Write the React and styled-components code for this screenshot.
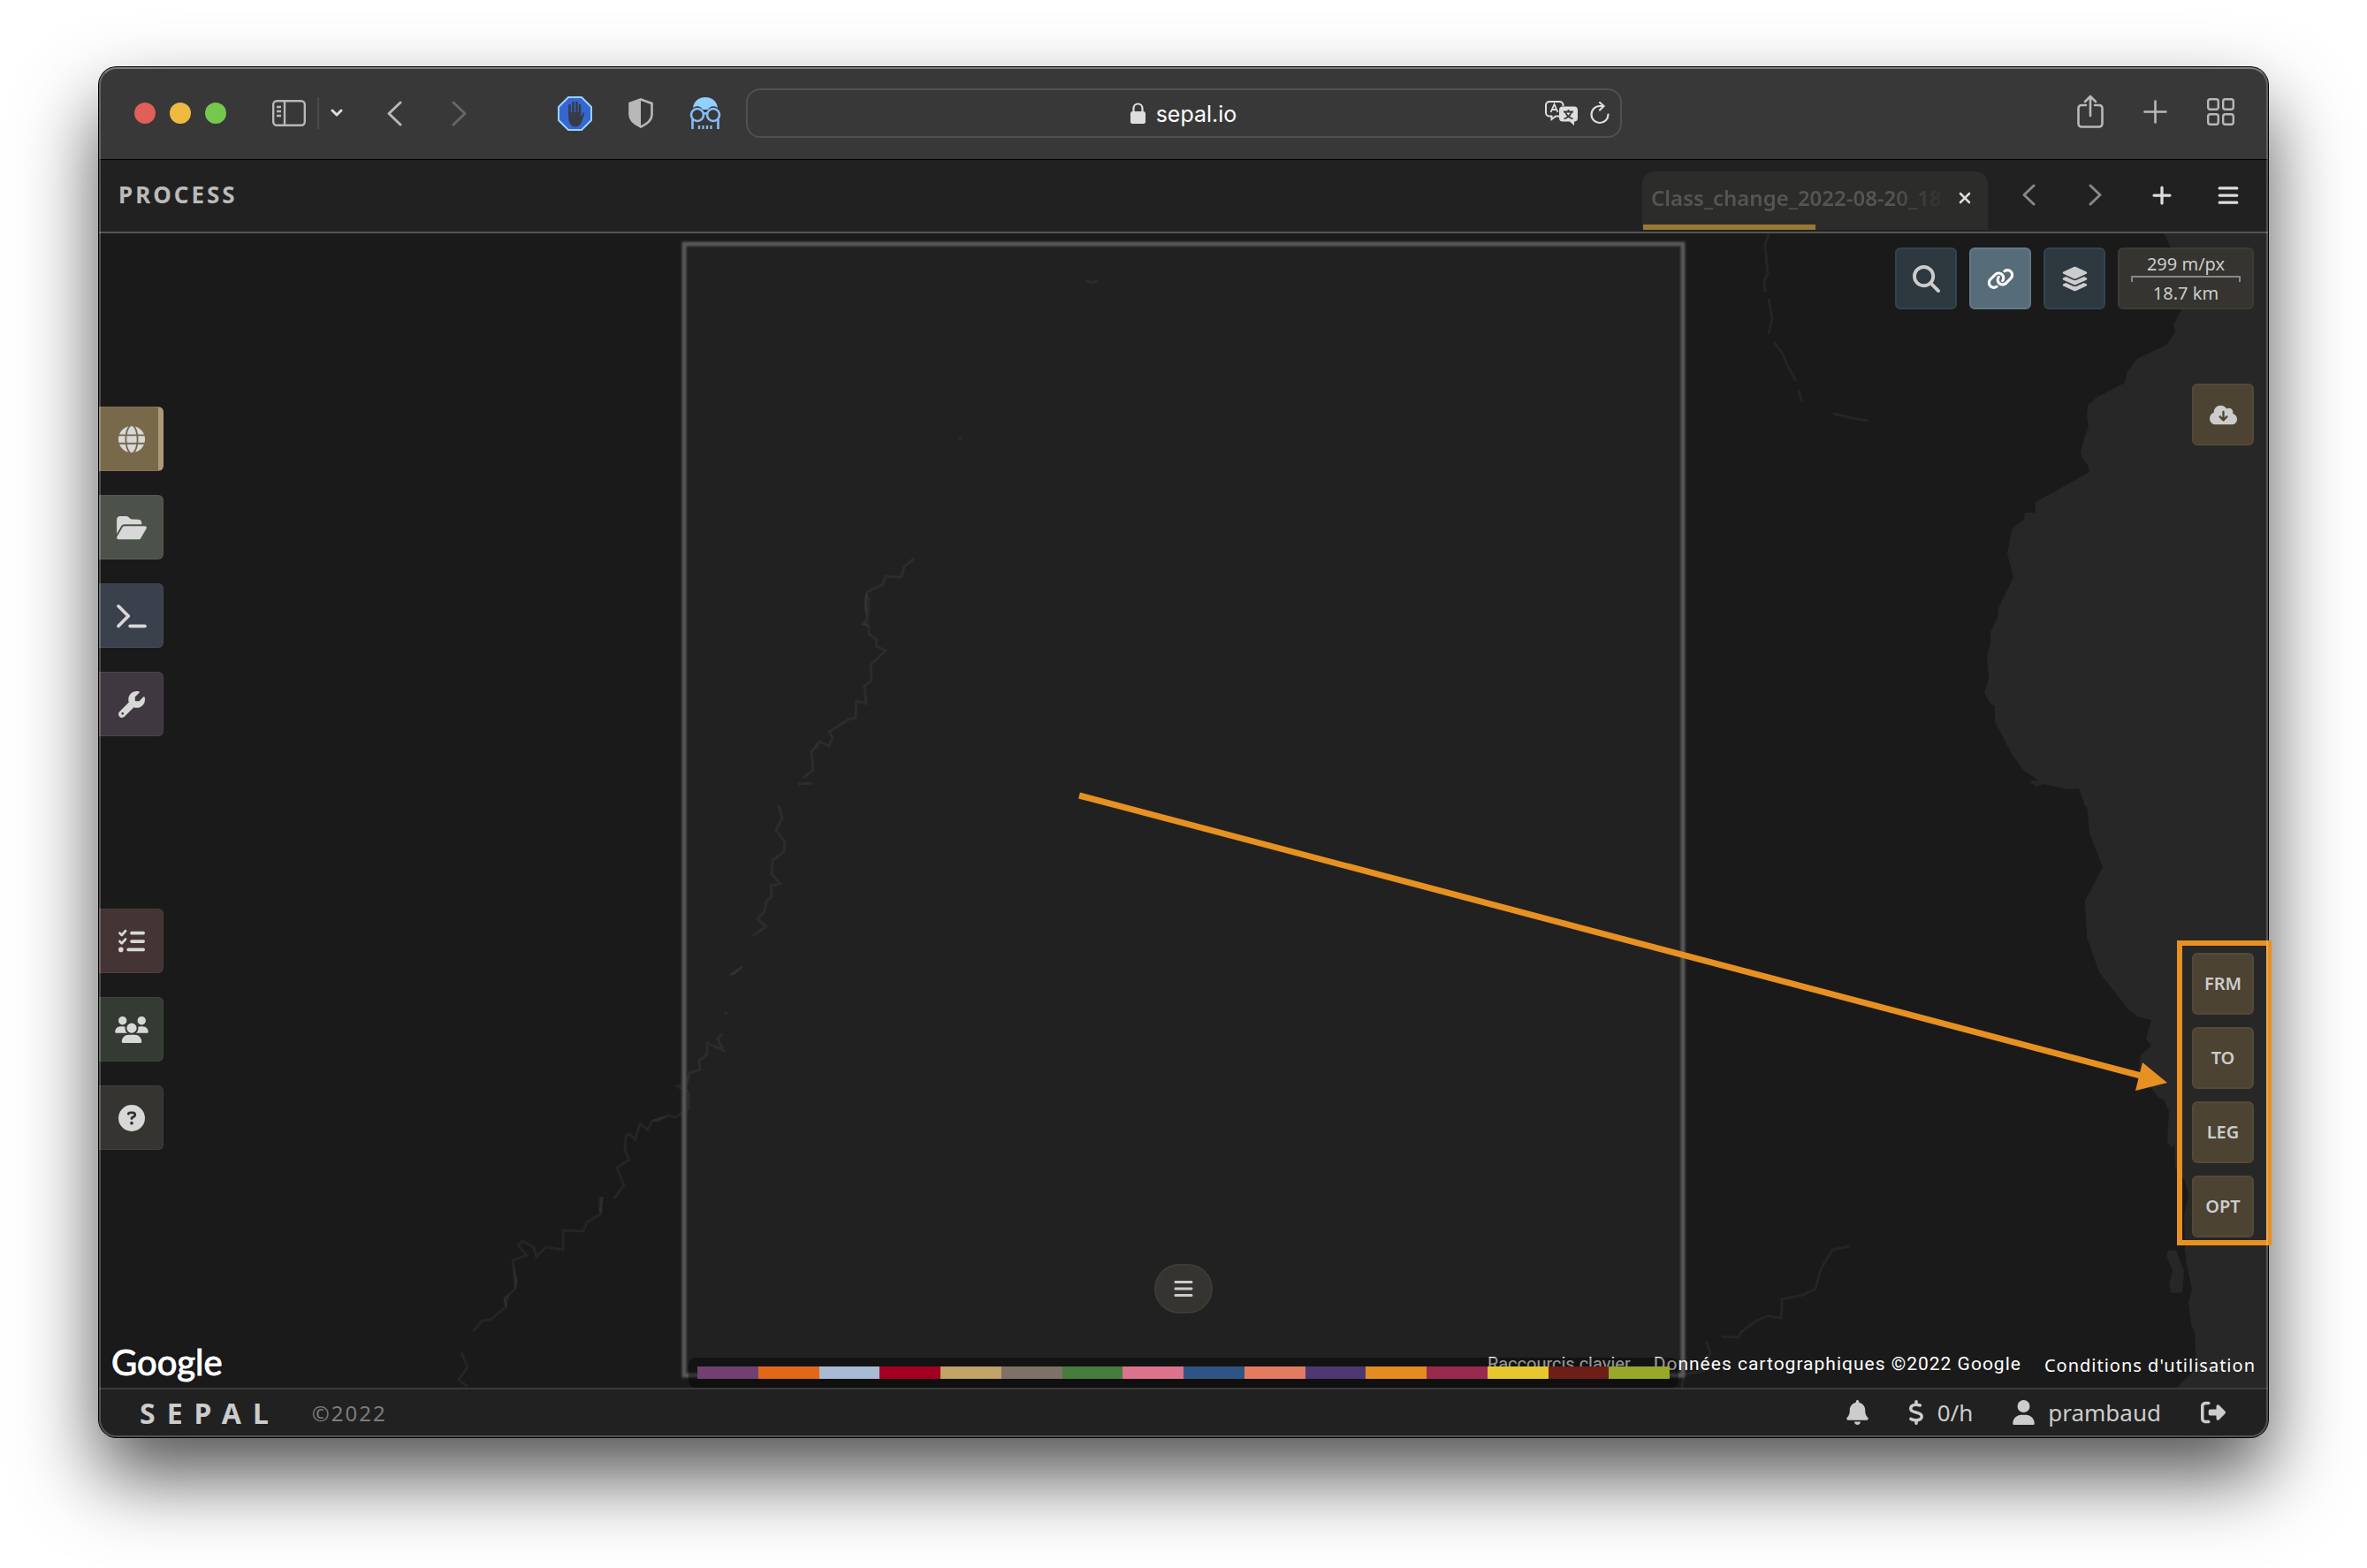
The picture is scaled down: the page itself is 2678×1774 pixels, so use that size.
import React from 'react'
import styled, { createGlobalStyle, css } from 'styled-components'
import {
  FaGlobe, FaFolderOpen, FaTerminal, FaWrench, FaListCheck, FaUsers, FaCircleQuestion, FaMagnifyingGlass,
  FaLink, FaLayerGroup, FaCloudArrowDown, FaBars, FaPlus, FaXmark, FaBell, FaDollarSign, FaUser,
  FaRightFromBracket
} from 'react-icons/fa6'

const GlobalStyle = createGlobalStyle`
  *, *::before, *::after { box-sizing: border-box; }
  body {
    margin: 0;
    background: #fff;
    font-family: "Noto Sans", "Open Sans", sans-serif;
    color: #ccc;
  }
  button, input { font: inherit; color: inherit; }
`

const Stage = styled.div`
  display: flex;
  min-height: 100vh;
  padding: 76px 112px 148px;
`

const Window = styled.div`
  position: relative;
  display: flex;
  flex: 1;
  min-width: 0;
  border-radius: 20px;
  box-shadow: 0 0 0 1px #000, 0 44px 88px rgba(0, 0, 0, 0.68);
`

const Frame = styled.div`
  position: relative;
  display: flex;
  flex-direction: column;
  flex: 1;
  min-width: 0;
  overflow: hidden;
  border-radius: 20px;
  background: #1a1a1a;

  &::after {
    content: "";
    position: absolute;
    inset: 0;
    z-index: 3;
    border: 2px solid rgba(255, 255, 255, 0.22);
    border-top-color: rgba(255, 255, 255, 0.36);
    border-radius: 20px;
    pointer-events: none;
  }
`

const PlainButton = styled.button`
  display: flex;
  align-items: center;
  justify-content: center;
  padding: 0;
  border: 0;
  background: none;
  cursor: pointer;
`

/* ---- browser chrome ---- */

const Toolbar = styled.div`
  display: grid;
  grid-template-columns: minmax(0, 1fr) minmax(0, 991px) minmax(0, 1fr);
  align-items: center;
  height: 105px;
  border-bottom: 1px solid #000;
  background: #383838;
  color: #b8b8b8;
`

const ToolSide = styled.div`
  display: flex;
  align-items: center;
  justify-content: ${p => p.$end ? 'flex-end' : 'flex-start'};
  padding: ${p => p.$end ? '0 38px 4px 0' : '0 0 0 40px'};
`

const ToolGroup = styled.div`
  display: flex;
  align-items: center;
  gap: ${p => p.$gap}px;
  margin-left: ${p => p.$before || 0}px;
`

const Light = styled.button`
  width: 24px;
  height: 24px;
  padding: 0;
  border: 0;
  border-radius: 50%;
  background: ${p => p.$color};
`

const Divider = styled.span`
  width: 2px;
  height: 36px;
  background: #4a4a4a;
`

const DimTool = styled(PlainButton)`
  color: #666;
`

const AddressBar = styled.div`
  display: grid;
  grid-template-columns: 1fr auto 1fr;
  align-items: center;
  height: 56px;
  padding: 0 12px;
  border: 2px solid #505050;
  border-radius: 16px;
  color: #dedede;
`

const Address = styled.label`
  grid-column: 2;
  display: flex;
  align-items: center;
  gap: 12px;
`

const AddressInput = styled.input`
  field-sizing: content;
  padding: 2px 0 0;
  border: 0;
  outline: 0;
  background: none;
  color: #fff;
  font-family: Inter, sans-serif;
  font-size: 25px;
  line-height: 32px;
`

const AddressActions = styled.div`
  display: flex;
  align-items: center;
  justify-content: flex-end;
  gap: 14px;
`

/* ---- app header ---- */

const Header = styled.header`
  display: flex;
  align-items: center;
  justify-content: space-between;
  height: 83px;
  padding: 0 8px 0 22px;
  border-bottom: 2px solid #555;
  background: #212121;
`

const Title = styled.h1`
  margin: 0;
  padding-bottom: 4px;
  color: #bbb;
  font-size: 26px;
  font-weight: 700;
  letter-spacing: 3px;
  text-transform: uppercase;
`

const Tabs = styled.nav`
  display: flex;
  align-self: stretch;
  align-items: center;
`

const Tab = styled.div`
  display: flex;
  align-items: center;
  align-self: flex-end;
  width: 391px;
  height: 66px;
  margin: 0 9px 2px 0;
  padding: 0 16px 6px 10px;
  border-radius: 14px 14px 0 0;
  background: linear-gradient(#987a35, #987a35) 1px 100% / 195px 6px no-repeat #2c2c2a;
`

const TabName = styled.button`
  flex: 1;
  min-width: 0;
  overflow: hidden;
  padding: 0;
  border: 0;
  background: none;
  color: #555552;
  font-size: 24px;
  font-weight: 600;
  line-height: 32px;
  text-align: left;
  white-space: nowrap;
  mask-image: linear-gradient(to right, #000 78%, transparent 98%);
`

const HeaderButton = styled(PlainButton)`
  width: 75px;
  height: 48px;
  padding-bottom: 2px;
  color: ${p => p.$dim ? '#888' : '#ddd'};
`

/* ---- map ---- */

const Map = styled.main`
  position: relative;
  display: grid;
  flex: 1;
  min-height: 0;
`

const MapCanvas = styled.svg`
  position: absolute;
  inset: 0;
  width: 100%;
  height: 100%;
`

const layer = css`
  grid-area: 1 / 1;
  display: flex;
  z-index: 1;
`

const SideMenu = styled.nav`
  ${layer}
  flex-direction: column;
  justify-content: space-between;
  justify-self: start;
  padding: 196px 0 269px;
`

const SideGroup = styled.div`
  display: flex;
  flex-direction: column;
  gap: 27px;
`

const SideButton = styled.button`
  display: flex;
  align-items: center;
  justify-content: center;
  width: 73px;
  height: 73px;
  padding: 0;
  border: 1px solid rgba(255, 255, 255, 0.05);
  border-right: ${p => p.$active ? '6px solid #ac9a76' : '1px solid rgba(255, 255, 255, 0.05)'};
  padding-left: ${p => p.$active ? 5 : 0}px;
  border-radius: 0 6px 6px 0;
  background: ${p => p.$color};
  color: #d8d8d8;

  svg {
    width: ${p => p.$icon || 30}px;
    height: 30px;
  }
`

const Tools = styled.div`
  ${layer}
  flex-direction: column;
  align-items: flex-end;
  justify-self: end;
  padding: 16px 16px 170px;
`

const ToolRow = styled.div`
  display: flex;
  gap: 14px;
  margin-bottom: 84px;
`

const tones = {
  blue: ['#2e383f', '#32444f'],
  active: ['#566c79', '#607987'],
  brown: ['#4c4332', '#544935']
}

const MapButton = styled.button`
  display: flex;
  align-items: center;
  justify-content: center;
  width: 70px;
  height: 70px;
  padding: 0;
  border: 2px solid ${p => tones[p.$tone][1]};
  border-radius: 6px;
  background: ${p => tones[p.$tone][0]};
  color: ${p => p.$tone === 'active' ? '#fff' : '#ccc'};

  svg {
    width: 31px;
    height: 31px;
  }
`

const PanelButton = styled(MapButton)`
  padding-bottom: 2px;
  font-size: 20px;
  font-weight: 600;
`

const PanelButtons = styled.div`
  display: flex;
  flex-direction: column;
  gap: 14px;
  margin-top: auto;
`

const Scale = styled.div`
  display: flex;
  flex-direction: column;
  justify-content: center;
  width: 154px;
  height: 70px;
  padding: 0 13px;
  border: 2px solid #3c3b35;
  border-radius: 6px;
  background: #353430;
  font-size: 20px;
  line-height: 26px;
  text-align: center;
`

const ScaleBar = styled.div`
  height: 7px;
  border: 2px solid #888;
  border-bottom: 0;
`

const Credits = styled.div`
  ${layer}
  align-items: flex-end;
  align-self: end;
  padding: 0 14px;
  color: #fff;
  font-family: Roboto, sans-serif;
  font-size: 20px;
  line-height: 28px;
`

const GoogleMark = styled.a`
  margin-right: auto;
  color: #fff;
  font-family: Lato, sans-serif;
  font-size: 40px;
  line-height: 58px;
  text-decoration: none;
  text-shadow: 0 0 3px #000;
  -webkit-text-stroke: 1px #fff;
`

const Shortcuts = styled.button`
  margin: 0 26px 13px 0;
  padding: 0;
  border: 0;
  background: none;
`

const MapData = styled.span`
  margin: 0 26px 13px 0;
  font-size: 21px;
  letter-spacing: 1px;
`

const Terms = styled.a`
  margin-bottom: 11px;
  color: #fff;
  font-family: "Noto Sans", sans-serif;
  letter-spacing: 1px;
  text-decoration: none;
`

const BottomCenter = styled.div`
  ${layer}
  flex-direction: column;
  align-items: center;
  align-self: end;
  justify-self: center;
  gap: 50px;
  width: 1120px;
  max-width: 100%;
`

const LegendToggle = styled(PlainButton)`
  width: 66px;
  height: 56px;
  border: 2px solid #3c3b35;
  border-radius: 28px;
  background: #353430;
  color: #ccc;
  font-size: 24px;
`

const Legend = styled.div`
  display: flex;
  width: 100%;
  padding: 10px;
  border-radius: 8px;
  background: rgba(0, 0, 0, 0.4);
`

const Swatch = styled.span`
  flex: 1;
  height: 14px;
  background: ${p => p.$color};
`

/* ---- footer ---- */

const Footer = styled.footer`
  display: flex;
  align-items: center;
  height: 56px;
  padding: 0 48px 2px 46px;
  border-top: 2px solid #3a3a3a;
  background: #212121;
  font-size: 26px;
`

const Brand = styled.strong`
  color: #ccc;
  font-size: 32px;
  font-weight: 700;
  letter-spacing: 13px;
`

const Copyright = styled.span`
  margin: 0 auto 0 36px;
  color: #7c7c7c;
  font-size: 24px;
  letter-spacing: 2px;
`

const FooterItem = styled(PlainButton)`
  gap: 15px;
  margin-left: 45px;
  color: #ccc;

  svg {
    width: ${p => p.$icon}px;
    height: 28px;
  }
`

/* ---- annotation ---- */

const Arrow = styled.svg`
  position: absolute;
  inset: 0;
  width: 100%;
  height: 100%;
  overflow: visible;
  pointer-events: none;
`

const colors = [
  '#714070', '#e26818', '#a9bad4', '#a30021', '#c1a267', '#7e7166', '#467c3c', '#da738b',
  '#2e5486', '#e37b60', '#4d3873', '#e58c20', '#982a4e', '#e7c72e', '#6d1e16', '#98a829'
]

const rivers = [
  'M1034 632L1023 641L1020 653L1002 652L999 661L981 670L979 681L981 700L976 706L983 709L983 717L992 724L991 731L1002 736L985 752L986 770L978 776L980 796L969 793L968 812L960 814L938 828L942 834L938 844L927 839L918 850L920 871L909 880',
  'M903 887L919 886',
  'M881 911L885 926L878 939L888 953L887 964L874 973L873 989L883 1000L872 1002L873 1014L867 1020L865 1031L857 1040L867 1048L851 1059',
  'M840 1094L826 1103M819 1146h4',
  'M817 1170L812 1175L818 1188L800 1180L800 1193L791 1200L792 1210L780 1214L777 1226L766 1229L779 1236L779 1254L764 1264L756 1262L737 1269L733 1278L724 1271L719 1289L712 1283L708 1285L707 1302L712 1312L698 1321L706 1341L695 1356',
  'M681 1354L679 1374L664 1383L660 1393L637 1392L637 1414L617 1411L607 1422L604 1411L591 1404L586 1409L596 1420L580 1426L584 1449L583 1458L571 1469L573 1478L555 1493L546 1494L535 1506',
  'M522 1530L529 1547L519 1561L529 1569',
  'M2001 264L1997 277L2000 310L1996 317L1997 330M2001 338L2005 360L2001 378M2007 387L2017 400L2021 411L2032 431M2035 442L2039 455M2074 468L2096 473L2113 476',
  'M2092 1410L2073 1414L2060 1436L2054 1458L2040 1465L2016 1470L2016 1480L2015 1491L1999 1489L1986 1495L1970 1507L1967 1513L1947 1512M1930 1517L1935 1530L1928 1551L1905 1555L1903 1570',
  'M1228 317l6 3l8 -2M1085 496h3'
]

// wider stretches of the river bed
const pools = 'M979 670L985 676L983 700L978 690ZM976 706L983 700L983 709ZM676 1354H683L681 1374L677 1370ZM580 1430L586 1449L583 1460L580 1448ZM570 1468L577 1465L573 1479L570 1476ZM918 850L927 840L926 847ZM826 1103L840 1093L832 1103ZM737 1267L756 1262L745 1270Z'

const land = 'M2448 264L2455 278L2462 300L2468 350L2459 368L2461 376L2451 390L2418 406L2407 420L2404 433L2373 449L2362 459L2361 470L2363 483L2358 496L2354 511L2356 519L2362 526L2364 534L2303 568L2303 580L2291 580L2290 587L2276 599L2271 627L2278 653L2261 688L2260 699L2252 715L2252 728L2248 742L2250 768L2245 784L2252 796L2257 799L2257 818L2260 822L2276 853L2289 871L2306 883L2296 884L2303 890L2311 887L2340 893L2352 892L2359 912L2361 912L2364 943L2379 981L2359 1019L2361 1060L2375 1100L2408 1142L2418 1150L2434 1154L2428 1175L2434 1183L2422 1194L2420 1211L2435 1232L2442 1242L2448 1244L2454 1257L2452 1291L2457 1299L2460 1294L2461 1321L2472 1336L2476 1352L2471 1375L2472 1413L2474 1430L2480 1460L2476 1473L2479 1499L2483 1506L2485 1548L2463 1570H2570V264Z'
const island = 'M2454 1414L2462 1415L2471 1438L2469 1462L2457 1463L2454 1454L2458 1438L2451 1420Z'

const SidebarIcon = () => (
  <svg width="38" height="30" viewBox="0 0 38 30" fill="none" stroke="currentColor" strokeWidth="2.4">
    <rect x="1.2" y="1.2" width="35.6" height="27.6" rx="4" />
    <path d="M14 1v28M5 8h5M5 13h5M5 18h5" />
  </svg>
)

const Chevron = ({ width, height, flip }) => (
  <svg width={width} height={height} viewBox={`0 0 ${width} ${height}`} fill="none" stroke="currentColor"
    strokeWidth="3" strokeLinecap="round" strokeLinejoin="round">
    <path d={flip
      ? `M2 2L${width - 2} ${height / 2}L2 ${height - 2}`
      : `M${width - 2} 2L2 ${height / 2}L${width - 2} ${height - 2}`} />
  </svg>
)

const BlockerIcon = () => (
  <svg width="39" height="39" viewBox="0 0 39 39">
    <path d="M12 1h15l11 11v15L27 38H12L1 27V12Z" fill="#3567d0" stroke="#9ad0ff" strokeWidth="2" />
    <path d="M13.5 20V10M17.5 19V7M21.5 19V7M25 20V10" stroke="#383b45" strokeWidth="2.6" strokeLinecap="round" />
    <path d="M12.2 18h14v5l2.500-4q1.500-1.500 1.500.5l-3 9q-2 6-7 6c-5 0-8-5-8-10Z" fill="#383b45" />
  </svg>
)

const ShieldIcon = () => (
  <svg width="28" height="34" viewBox="0 0 28 34">
    <path d="M14 1.5L26.5 6v13c0 6-6 10.500-12.500 13.500C7.500 29.500 1.500 25 1.500 19V6Z" fill="none" stroke="currentColor" strokeWidth="2.6" />
    <path d="M14 1.5V32.5C7.500 29.500 1.500 25 1.500 19V6Z" fill="currentColor" />
  </svg>
)

const GlassesIcon = () => (
  <svg width="36" height="38" viewBox="0 0 36 38" fill="none" stroke="#86bdf8" strokeWidth="2.6">
    <path d="M4 13C5 5 11 1 18 1s13 4 14 12c-4-3-9-2-11 2h-6c-2-4-7-5-11-2Z" fill="#92d0ff" stroke="none" />
    <circle cx="9" cy="21" r="7" />
    <circle cx="27" cy="21" r="7" />
    <path d="M15 20q3-1.500 6 0M3.500 26v11M32.500 26v11" />
    <path d="M11 33v4M15.500 33v4M20 33v4M24.500 33v4" strokeWidth="2.2" />
  </svg>
)

const LockIcon = () => (
  <svg width="17" height="24" viewBox="0 0 17 24">
    <rect y="10" width="17" height="14" rx="2.5" fill="currentColor" />
    <path d="M3.500 11V6.500a5 5 0 0 1 10 0V11" fill="none" stroke="currentColor" strokeWidth="2.2" />
  </svg>
)

const TranslateIcon = () => (
  <svg width="37" height="28" viewBox="0 0 37 28">
    <path d="M16 17.500h-4L7.500 21v-3.500H5A4 4 0 0 1 1 13.500V5A4 4 0 0 1 5 1h11.500a4 4 0 0 1 4 4v1" fill="none" stroke="currentColor" strokeWidth="2" />
    <path d="M6.500 13L10.500 4l4 9M8 10h5" fill="none" stroke="currentColor" strokeWidth="1.8" />
    <path d="M20 6.500h13a4 4 0 0 1 4 4v9a4 4 0 0 1-4 4v4.500l-5-4.500h-8a4 4 0 0 1-4-4v-9a4 4 0 0 1 4-4Z" fill="currentColor" />
    <path d="M21 12.500h11M26.500 10v2.500M23 12.500q2 6 8.500 8M30 12.500q-2 6-8.500 8" fill="none" stroke="#383838" strokeWidth="1.8" />
  </svg>
)

const ReloadIcon = () => (
  <svg width="22" height="26" viewBox="0 0 22 26" fill="none" stroke="currentColor" strokeWidth="2.2" strokeLinecap="round">
    <path d="M20.500 14.500a9.500 9.500 0 1 1-9.500-9.500h4M11 1l4.500 4L11 9.500" />
  </svg>
)

const ShareIcon = () => (
  <svg width="30" height="38" viewBox="0 0 30 38" fill="none" stroke="currentColor" strokeWidth="2.6" strokeLinecap="round" strokeLinejoin="round">
    <path d="M10 12H5a3.500 3.500 0 0 0-3.500 3.500V33A3.500 3.500 0 0 0 5 36.500h20a3.500 3.500 0 0 0 3.500-3.500V15.500A3.500 3.500 0 0 0 25 12h-5M15 24V2M9 8l6-6 6 6" />
  </svg>
)

const AddIcon = () => (
  <svg width="27" height="27" viewBox="0 0 27 27" stroke="currentColor" strokeWidth="2.6" strokeLinecap="round">
    <path d="M13.500 1.500v24M1.500 13.500h24" />
  </svg>
)

const GridIcon = () => (
  <svg width="31" height="31" viewBox="0 0 31 31" fill="none" stroke="currentColor" strokeWidth="2.4">
    <rect x="1.2" y="1.2" width="11.6" height="11.6" rx="2.5" />
    <rect x="18.2" y="1.2" width="11.6" height="11.6" rx="2.5" />
    <rect x="1.2" y="18.2" width="11.6" height="11.6" rx="2.5" />
    <rect x="18.2" y="18.2" width="11.6" height="11.6" rx="2.5" />
  </svg>
)

function Browser() {
  return (
    <Toolbar>
      <ToolSide>
        <ToolGroup $gap={16}>
          <Light $color="#e05f57" aria-label="Close" />
          <Light $color="#eebb40" aria-label="Minimize" />
          <Light $color="#74c84e" aria-label="Zoom" />
        </ToolGroup>
        <ToolGroup $gap={13} $before={52}>
          <PlainButton aria-label="Sidebar"><SidebarIcon /></PlainButton>
          <Divider />
          <PlainButton aria-label="Tab groups">
            <svg width="14" height="10" viewBox="0 0 14 10" fill="none" stroke="#ddd" strokeWidth="3" strokeLinecap="round" strokeLinejoin="round">
              <path d="M2 2l5 5 5-5" />
            </svg>
          </PlainButton>
        </ToolGroup>
        <ToolGroup $gap={56} $before={50}>
          <PlainButton aria-label="Back"><Chevron width={17} height={29} /></PlainButton>
          <DimTool aria-label="Forward"><Chevron width={17} height={29} flip /></DimTool>
        </ToolGroup>
        <ToolGroup $gap={41} $before={103}>
          <PlainButton aria-label="Blocker"><BlockerIcon /></PlainButton>
          <PlainButton aria-label="Privacy report"><ShieldIcon /></PlainButton>
          <PlainButton aria-label="Reader"><GlassesIcon /></PlainButton>
        </ToolGroup>
      </ToolSide>
      <AddressBar>
        <Address>
          <LockIcon />
          <AddressInput type="text" aria-label="Address" defaultValue="sepal.io" />
        </Address>
        <AddressActions>
          <PlainButton aria-label="Translate"><TranslateIcon /></PlainButton>
          <PlainButton aria-label="Reload"><ReloadIcon /></PlainButton>
        </AddressActions>
      </AddressBar>
      <ToolSide $end>
        <ToolGroup $gap={45}>
          <PlainButton aria-label="Share"><ShareIcon /></PlainButton>
          <PlainButton aria-label="New tab"><AddIcon /></PlainButton>
          <PlainButton aria-label="Tab overview"><GridIcon /></PlainButton>
        </ToolGroup>
      </ToolSide>
    </Toolbar>
  )
}

function MapDrawing() {
  return (
    <MapCanvas viewBox="112 264 2454 1306" preserveAspectRatio="xMidYMid slice" aria-hidden="true">
      <defs>
        <filter id="soft" x="-5%" y="-5%" width="110%" height="110%">
          <feGaussianBlur stdDeviation="0.8" />
        </filter>
      </defs>
      <rect x="774" y="276" width="1130" height="1280" fill="#212121" />
      <path d={land} fill="#272727" />
      <path d={island} fill="#272727" />
      <g fill="none" stroke="#fff" strokeOpacity="0.05" strokeWidth="3">
        {rivers.map(d => <path key={d} d={d} />)}
      </g>
      <path d={pools} fill="#fff" fillOpacity="0.04" />
      <rect x="774" y="276" width="1130" height="1280" fill="none" stroke="#595959" strokeWidth="5" filter="url(#soft)" />
    </MapCanvas>
  )
}

function App() {
  return (
    <>
      <GlobalStyle />
      <Stage>
        <Window>
          <Frame>
            <Browser />
            <Header>
              <Title>Process</Title>
              <Tabs>
                <Tab>
                  <TabName type="button">Class_change_2022-08-20_18-</TabName>
                  <PlainButton aria-label="Close tab"><FaXmark size={20} color="#ddd" /></PlainButton>
                </Tab>
                <HeaderButton $dim aria-label="Previous tab"><Chevron width={15} height={25} /></HeaderButton>
                <HeaderButton $dim aria-label="Next tab"><Chevron width={15} height={25} flip /></HeaderButton>
                <HeaderButton aria-label="Add tab"><FaPlus size={26} /></HeaderButton>
                <HeaderButton aria-label="Tab menu"><FaBars size={26} /></HeaderButton>
              </Tabs>
            </Header>
            <Map>
              <MapDrawing />
              <Credits>
                <GoogleMark href="#google">Google</GoogleMark>
                <Shortcuts type="button">Raccourcis clavier</Shortcuts>
                <MapData>Données cartographiques ©2022 Google</MapData>
                <Terms href="#terms">Conditions d'utilisation</Terms>
              </Credits>
              <BottomCenter>
                <LegendToggle type="button" aria-label="Legend"><FaBars /></LegendToggle>
                <Legend>
                  {colors.map(color => <Swatch key={color} $color={color} />)}
                </Legend>
              </BottomCenter>
              <SideMenu>
                <SideGroup>
                  <SideButton $color="#78694b" $active aria-label="Process"><FaGlobe /></SideButton>
                  <SideButton $color="#4c5249" $icon={34} aria-label="Files"><FaFolderOpen /></SideButton>
                  <SideButton $color="#3b404d" $icon={34} aria-label="Terminal"><FaTerminal /></SideButton>
                  <SideButton $color="#403840" aria-label="Apps"><FaWrench /></SideButton>
                </SideGroup>
                <SideGroup>
                  <SideButton $color="#443433" aria-label="Tasks"><FaListCheck /></SideButton>
                  <SideButton $color="#343b33" $icon={38} aria-label="Users"><FaUsers /></SideButton>
                  <SideButton $color="#353430" aria-label="Help"><FaCircleQuestion /></SideButton>
                </SideGroup>
              </SideMenu>
              <Tools>
                <ToolRow>
                  <MapButton $tone="blue" aria-label="Search"><FaMagnifyingGlass /></MapButton>
                  <MapButton $tone="active" aria-label="Link maps"><FaLink /></MapButton>
                  <MapButton $tone="blue" aria-label="Layers"><FaLayerGroup /></MapButton>
                  <Scale>
                    <span>299 m/px</span>
                    <ScaleBar />
                    <span>18.7 km</span>
                  </Scale>
                </ToolRow>
                <MapButton $tone="brown" aria-label="Retrieve"><FaCloudArrowDown /></MapButton>
                <PanelButtons>
                  <PanelButton $tone="brown">FRM</PanelButton>
                  <PanelButton $tone="brown">TO</PanelButton>
                  <PanelButton $tone="brown">LEG</PanelButton>
                  <PanelButton $tone="brown">OPT</PanelButton>
                </PanelButtons>
              </Tools>
            </Map>
            <Footer>
              <Brand>SEPAL</Brand>
              <Copyright>©2022</Copyright>
              <FooterItem type="button" $icon={25} aria-label="Notifications"><FaBell /></FooterItem>
              <FooterItem type="button" $icon={18}><FaDollarSign />0/h</FooterItem>
              <FooterItem type="button" $icon={25}><FaUser />prambaud</FooterItem>
              <FooterItem type="button" $icon={28} aria-label="Log out"><FaRightFromBracket /></FooterItem>
            </Footer>
          </Frame>
          <Arrow viewBox="112 76 2454 1550" aria-hidden="true">
            <path d="M1221 900L2422 1217" stroke="#e69122" strokeWidth="7" />
            <path d="M2424 1202L2452 1225L2416 1234Z" fill="#e69122" />
            <rect x="2466" y="1067" width="101" height="339" fill="none" stroke="#e69122" strokeWidth="6" />
          </Arrow>
        </Window>
      </Stage>
    </>
  )
}

export default App
